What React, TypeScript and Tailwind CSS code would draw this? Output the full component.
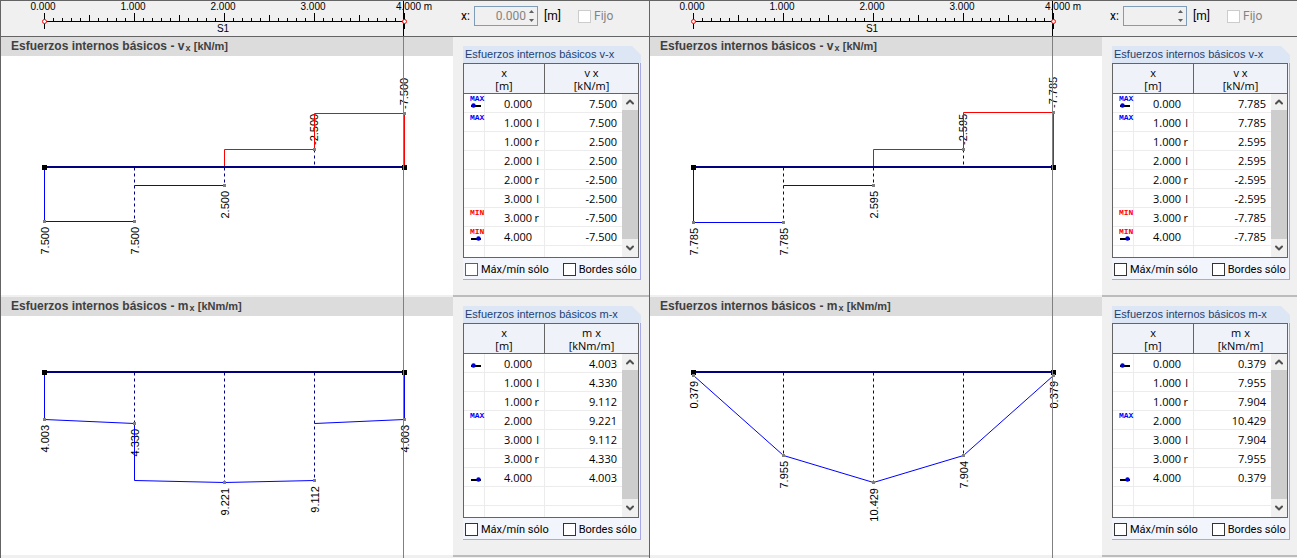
import clsx from "clsx";
import { ChevronDown, ChevronUp } from "lucide-react";

type Mark = "MAX" | "MIN";
type Row = { x: string; side?: "l" | "r"; value: string; mark?: Mark; end?: "start" | "end" };
type Label = { x: number; y: number; text: string };
type Diagram = {
  quantity: string;
  unit: string;
  base: number;
  blue: string[];
  red: string[];
  dashed: [number, number, number][];
  labels: Label[];
  rows: Row[];
  focused?: boolean;
};
type ResultWindow = { id: string; position: string; diagrams: Diagram[] };

const windows: ResultWindow[] = [
  {
    id: "left",
    position: "0.000",
    diagrams: [
      {
        quantity: "v",
        unit: "kN/m",
        base: 111,
        focused: true,
        blue: ["43,111 43,165 133,165", "133,129 223,129"],
        red: ["223,111 223,93 313,93 313,57 403,57 403,111"],
        dashed: [[133, 111, 165], [223, 111, 129], [313, 93, 111]],
        labels: [
          { x: 43, y: 165, text: "7.500" },
          { x: 133, y: 165, text: "7.500" },
          { x: 223, y: 129, text: "2.500" },
          { x: 313, y: 93, text: "-2.500" },
          { x: 403, y: 57, text: "-7.500" },
        ],
        rows: [
          { x: "0.000", value: "7.500", mark: "MAX", end: "start" },
          { x: "1.000", side: "l", value: "7.500", mark: "MAX" },
          { x: "1.000", side: "r", value: "2.500" },
          { x: "2.000", side: "l", value: "2.500" },
          { x: "2.000", side: "r", value: "-2.500" },
          { x: "3.000", side: "l", value: "-2.500" },
          { x: "3.000", side: "r", value: "-7.500", mark: "MIN" },
          { x: "4.000", value: "-7.500", mark: "MIN", end: "end" },
        ],
      },
      {
        quantity: "m",
        unit: "kNm/m",
        base: 56,
        blue: ["43,56 43,103 133,107 133,164 223,166 313,164", "313,107 403,103 403,56"],
        red: [],
        dashed: [[133, 56, 107], [223, 56, 166], [313, 56, 164]],
        labels: [
          { x: 43, y: 103, text: "4.003" },
          { x: 133, y: 107, text: "4.330" },
          { x: 223, y: 166, text: "9.221" },
          { x: 313, y: 164, text: "9.112" },
          { x: 403, y: 103, text: "4.003" },
        ],
        rows: [
          { x: "0.000", value: "4.003", end: "start" },
          { x: "1.000", side: "l", value: "4.330" },
          { x: "1.000", side: "r", value: "9.112" },
          { x: "2.000", value: "9.221", mark: "MAX" },
          { x: "3.000", side: "l", value: "9.112" },
          { x: "3.000", side: "r", value: "4.330" },
          { x: "4.000", value: "4.003", end: "end" },
        ],
      },
    ],
  },
  {
    id: "right",
    position: "",
    diagrams: [
      {
        quantity: "v",
        unit: "kN/m",
        base: 111,
        blue: ["43,111 43,166 133,166", "133,129 223,129"],
        red: ["223,111 223,93 313,93 313,56 403,56 403,111"],
        dashed: [[133, 111, 166], [223, 111, 129], [313, 93, 111]],
        labels: [
          { x: 43, y: 166, text: "7.785" },
          { x: 133, y: 166, text: "7.785" },
          { x: 223, y: 129, text: "2.595" },
          { x: 313, y: 93, text: "-2.595" },
          { x: 403, y: 56, text: "-7.785" },
        ],
        rows: [
          { x: "0.000", value: "7.785", mark: "MAX", end: "start" },
          { x: "1.000", side: "l", value: "7.785", mark: "MAX" },
          { x: "1.000", side: "r", value: "2.595" },
          { x: "2.000", side: "l", value: "2.595" },
          { x: "2.000", side: "r", value: "-2.595" },
          { x: "3.000", side: "l", value: "-2.595" },
          { x: "3.000", side: "r", value: "-7.785", mark: "MIN" },
          { x: "4.000", value: "-7.785", mark: "MIN", end: "end" },
        ],
      },
      {
        quantity: "m",
        unit: "kNm/m",
        base: 56,
        blue: ["43,56 43,59 133,139 223,166 313,139 403,59 403,56"],
        red: [],
        dashed: [[133, 56, 139], [223, 56, 166], [313, 56, 139]],
        labels: [
          { x: 43, y: 59, text: "0.379" },
          { x: 133, y: 139, text: "7.955" },
          { x: 223, y: 166, text: "10.429" },
          { x: 313, y: 139, text: "7.904" },
          { x: 403, y: 59, text: "0.379" },
        ],
        rows: [
          { x: "0.000", value: "0.379", end: "start" },
          { x: "1.000", side: "l", value: "7.955" },
          { x: "1.000", side: "r", value: "7.904" },
          { x: "2.000", value: "10.429", mark: "MAX" },
          { x: "3.000", side: "l", value: "7.904" },
          { x: "3.000", side: "r", value: "7.955" },
          { x: "4.000", value: "0.379", end: "end" },
        ],
      },
    ],
  },
];

const arial = "font-['Liberation_Sans',Arial,sans-serif]";

function Ruler() {
  const ticks = Array.from({ length: 41 }, (_, i) => i);

  return (
    <svg className={clsx("block text-[10px]", arial)} width="452" height="35" role="img" aria-label="S1">
      {ticks.map((i) => (
        <rect
          key={i}
          x={43 + i * 9}
          y={i % 10 === 0 ? 12 : i % 5 === 0 ? 14 : 17}
          width="1"
          height={i % 10 === 0 ? 8 : i % 5 === 0 ? 6 : 3}
        />
      ))}
      <rect x="43" y="20" width="361" height="1" />
      <rect x="43" y="20" width="1" height="8" />
      <rect x="403" y="20" width="1" height="8" />
      <rect x="402" y="0" width="1" height="35" />
      <circle cx="43.5" cy="20.5" r="2" fill="#fff" stroke="#ff0000" />
      <circle cx="403.5" cy="20.5" r="2" fill="#fff" stroke="#ff0000" />
      {["0.000", "1.000", "2.000", "3.000"].map((label, i) => (
        <text key={label} x={42 + i * 90} y="9" textAnchor="middle">
          {label}
        </text>
      ))}
      <text x="395" y="9">4.000 m</text>
      <text x="222" y="31" textAnchor="middle">S1</text>
    </svg>
  );
}

function Plot({ diagram }: { diagram: Diagram }) {
  const { base, blue, red, dashed, labels } = diagram;

  return (
    <svg className={clsx("block text-[11px]", arial)} width="452" height="239" role="img" aria-label={`${diagram.quantity}-x`}>
      {labels.map(({ x, y, text }) => {
        const above = text.startsWith("-");
        return (
          <text
            key={x}
            textAnchor={above ? "start" : "end"}
            transform={`translate(${x + (above ? 4 : 5)} ${above ? y - 4 : y + 6}) rotate(-90)`}
          >
            {text}
          </text>
        );
      })}
      <g transform="translate(0.5 0.5)" fill="none">
        {dashed.map(([x, y1, y2]) => (
          <line key={x} x1={x} y1={y1} x2={x} y2={y2} stroke="#000080" strokeDasharray="3 3" />
        ))}
        {blue.map((points) => (
          <polyline key={points} points={points} stroke="#0000ff" />
        ))}
        {red.map((points) => (
          <polyline key={points} points={points} stroke="#ff0000" />
        ))}
      </g>
      <rect x="43" y={base - 1} width="361" height="2" fill="#000080" />
      <rect x="41" y={base - 2} width="5" height="5" />
      <rect x="401" y={base - 2} width="5" height="5" />
      {labels.map(({ x, y }) => (
        <rect key={x} x={x - 1} y={y - 1} width="3" height="3" fill="#808080" />
      ))}
    </svg>
  );
}

function EndMarker({ end }: { end: "start" | "end" }) {
  return (
    <svg className="block" width="10" height="5" aria-hidden="true">
      <rect y="2" width="10" height="2" />
      <circle cx={end === "start" ? 2.5 : 7.5} cy="2.5" r="2.2" fill="#0000d0" />
    </svg>
  );
}

function Tick({ label, focused, disabled }: { label: string; focused?: boolean; disabled?: boolean }) {
  return (
    <label className={clsx("flex items-center gap-[3px] whitespace-nowrap", disabled && "text-[#838383]")}>
      <input
        type="checkbox"
        disabled={disabled}
        className={clsx(
          "size-[13px] shrink-0 appearance-none border bg-white",
          disabled ? "border-[#cccccc]" : focused ? "border-[#0078d7]" : "border-[#333333]",
        )}
      />
      {label}
    </label>
  );
}

function ScrollBar() {
  return (
    <div className="absolute top-[30px] right-0 bottom-0 flex w-4 flex-col bg-[#f0f0f0] text-[#505050]">
      <button type="button" aria-label="Subir" className="grid h-4 place-items-center">
        <ChevronUp className="size-3" strokeWidth={4} />
      </button>
      <div className="flex-1 bg-[#cdcdcd]" />
      <button type="button" aria-label="Bajar" className="grid h-[18px] place-items-center">
        <ChevronDown className="size-3" strokeWidth={4} />
      </button>
    </div>
  );
}

function ResultTable({ diagram }: { diagram: Diagram }) {
  return (
    <div className="relative h-[195px] overflow-hidden border border-[#646464] bg-white">
      <table className="w-full table-fixed border-separate border-spacing-0 font-['Open_Sans','Noto_Sans',sans-serif] text-[11px] leading-[13px]">
        <colgroup>
          <col className="w-[21px]" />
          <col className="w-[60px]" />
          <col />
          <col className="w-4" />
        </colgroup>
        <thead className="bg-[#eff3f9]">
          <tr className="h-[30px]">
            <th colSpan={2} className="border-r border-b border-[#646464] p-0 font-normal">
              <span className="block">x</span>
              <span className="block">[m]</span>
            </th>
            <th colSpan={2} className="border-b border-[#646464] p-0 font-normal">
              <span className="block">
                {diagram.quantity} x
              </span>
              <span className="block">[{diagram.unit}]</span>
            </th>
          </tr>
        </thead>
        <tbody>
          {Array.from({ length: 9 }, (_, i) => {
            const row = diagram.rows[i];
            return (
              <tr key={i} className="h-[19px] [&>td]:border-b [&>td]:border-[#ececec] [&>td]:p-0">
                <td className="border-r align-top">
                  <div className="flex h-[18px] flex-col pt-px pl-1.5">
                    <span
                      className={clsx(
                        "block h-2 font-['Liberation_Mono',monospace] text-[8px] leading-[8px] font-bold",
                        row?.mark === "MIN" ? "text-[#ff0000]" : "text-[#0000ff]",
                      )}
                    >
                      {row?.mark}
                    </span>
                    {row?.end && <span className="pl-px"><EndMarker end={row.end} /></span>}
                  </div>
                </td>
                <td className="border-r text-right">
                  {row && (
                    <span className="flex justify-end pr-[5px]">
                      {row.x}
                      <span className="w-[7px] text-right">{row.side}</span>
                    </span>
                  )}
                </td>
                <td className="text-right">
                  <span className="block pr-[5px]">{row?.value}</span>
                </td>
                <td />
              </tr>
            );
          })}
        </tbody>
      </table>
      <ScrollBar />
    </div>
  );
}

function DiagramSection({ diagram }: { diagram: Diagram }) {
  return (
    <section className="flex h-[260px]">
      <div className="min-w-0 flex-1 overflow-hidden border-b-2 border-[#f0f0f0] bg-white">
        <h2 className={clsx("h-[19px] bg-[#dcdcdc] pl-2.5 text-[12px] leading-[19px] font-bold text-[#404040]", arial)}>
          Esfuerzos internos básicos - {diagram.quantity}
          <sub className="bottom-0 pl-px align-[-1px] text-[9px] leading-none">x</sub>{" "}
          <span className="text-[11px]">[{diagram.unit}]</span>
        </h2>
        <Plot diagram={diagram} />
      </div>
      <div className="w-[196px] shrink-0 border-b-2 border-[#bcbcbc] pt-[9px] pr-2 pl-2.5">
        <h3
          className={clsx(
            "h-[17px] bg-[#dce6f5] pl-0.5 text-[11px] leading-[17px] text-[#1c3f72] [clip-path:polygon(0_0,169px_0,100%_9px,100%_100%,0_100%)]",
            arial,
          )}
        >
          Esfuerzos internos básicos {diagram.quantity}-x
        </h3>
        <div className="border-r border-b border-[#a8a8e8] bg-[#f2f5fb] pr-px">
          <ResultTable diagram={diagram} />
          <div className="flex h-[21px] items-center gap-3.5 pt-0.5 pl-0.5 text-[11px] leading-[16px]">
            <Tick label="Máx/mín sólo" focused={diagram.focused} />
            <Tick label="Bordes sólo" />
          </div>
        </div>
      </div>
    </section>
  );
}

function PositionBar({ id, position }: { id: string; position: string }) {
  return (
    <div className="flex w-[196px] shrink-0 items-center pt-[5px] pl-2 text-[12px] leading-[16px]">
      <label htmlFor={`x-${id}`} className="w-[13px]">x:</label>
      <div className="flex h-5 w-16 border border-[#7f9db9]">
        <input
          id={`x-${id}`}
          className="w-0 min-w-0 flex-1 text-right text-[#838383]"
          defaultValue={position}
          disabled
        />
        <div className="flex w-[11px] flex-col text-[#606060]">
          <button type="button" aria-label="Aumentar" disabled className="grid flex-1 place-items-center">
            <svg width="5" height="3" fill="currentColor" aria-hidden="true"><path d="M0 3 2.5 0 5 3Z" /></svg>
          </button>
          <button type="button" aria-label="Disminuir" disabled className="grid flex-1 place-items-center">
            <svg width="5" height="3" fill="currentColor" aria-hidden="true"><path d="M0 0 2.5 3 5 0Z" /></svg>
          </button>
        </div>
      </div>
      <span className="w-10 pl-1.5">[m]</span>
      <Tick label="Fijo" disabled />
    </div>
  );
}

export default function App() {
  return (
    <div className="min-h-screen overflow-hidden bg-[#f0f0f0] font-[Roboto,'Noto_Sans',sans-serif] text-black">
      <div className="-mr-px grid min-h-screen grid-cols-2">
        {windows.map((win) => (
          <main key={win.id} className="relative border-t border-l border-[#646464]">
            <header className="flex h-9 items-start border-b border-[#646464]">
              <div className="min-w-0 flex-1 overflow-hidden">
                <Ruler />
              </div>
              <PositionBar id={win.id} position={win.position} />
            </header>
            {win.diagrams.map((diagram) => (
              <DiagramSection key={diagram.quantity} diagram={diagram} />
            ))}
            {/* cursor at the current x position */}
            <div className="absolute top-9 bottom-0 left-[402px] w-px bg-[#808080]" />
          </main>
        ))}
      </div>
    </div>
  );
}
